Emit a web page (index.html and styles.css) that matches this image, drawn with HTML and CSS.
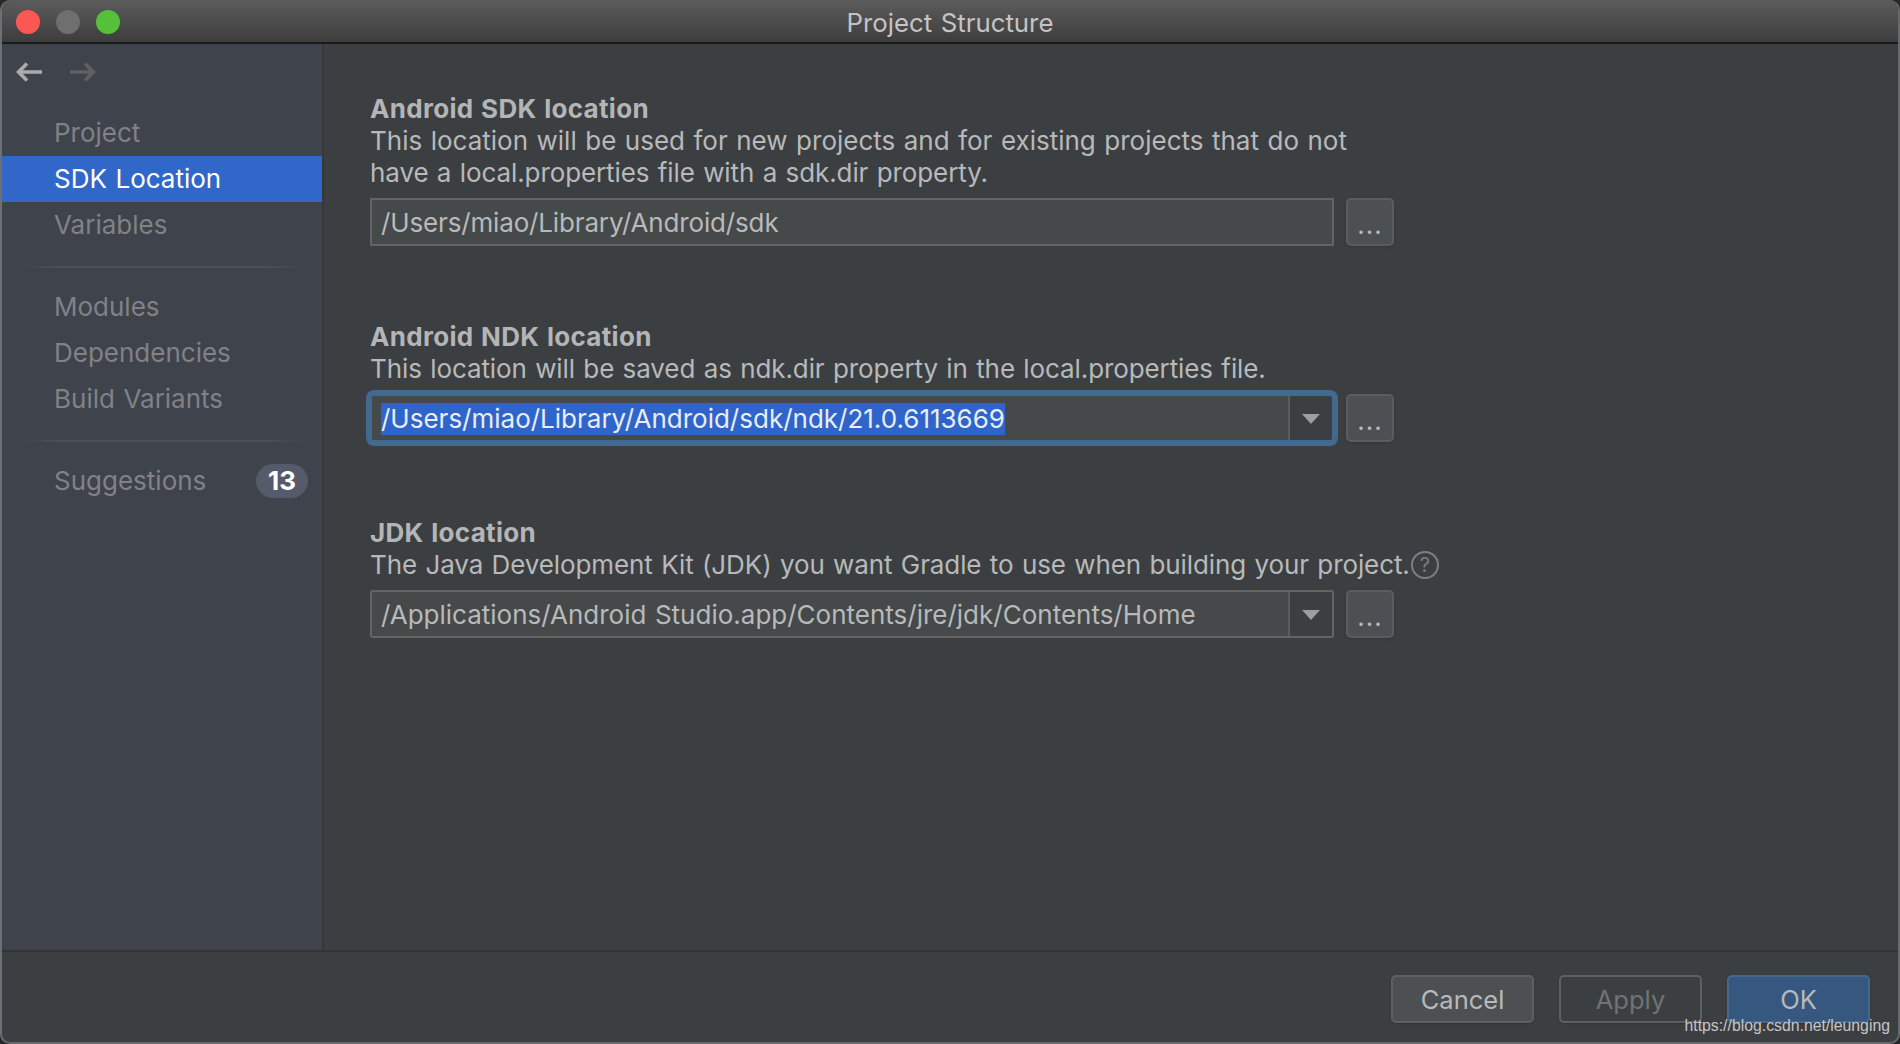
FILE: index.html
```html
<!DOCTYPE html>
<html lang="en">
<head>
    <meta charset="UTF-8">
    <title>Project Structure</title>
    <link rel="stylesheet" href="styles.css">
</head>
<body>
    <div class="window">
        <div class="titlebar">
            <div class="lights">
                <span class="light red"></span>
                <span class="light gray"></span>
                <span class="light green"></span>
            </div>
            <div class="title">Project Structure</div>
        </div>
        <div class="main">
            <div class="sidebar">
                <div class="nav-arrows">
                    <svg width="26" height="20" viewBox="0 0 26 20" class="arrow-on"><path d="M26 10H3M11 1.500L2.500 10L11 18.500" fill="none" stroke="currentColor" stroke-width="3.600"/></svg>
                    <svg width="26" height="20" viewBox="0 0 26 20" class="arrow-off"><path d="M0 10H23M15 1.500L23.500 10L15 18.500" fill="none" stroke="currentColor" stroke-width="3.600"/></svg>
                </div>
                <div class="nav-item">Project</div>
                <div class="nav-item active">SDK Location</div>
                <div class="nav-item">Variables</div>
                <div class="nav-sep"></div>
                <div class="nav-item">Modules</div>
                <div class="nav-item">Dependencies</div>
                <div class="nav-item">Build Variants</div>
                <div class="nav-sep"></div>
                <div class="nav-item">Suggestions<span class="badge">13</span></div>
            </div>
            <div class="content">
                <div class="section">
                    <div class="heading">Android SDK location</div>
                    <div class="desc"><span class="wide">This location will be used for new projects and for existing projects that do not</span><br>have a local.properties file with a sdk.dir property.</div>
                    <div class="field-row">
                        <div class="field tight">/Users/miao/Library/Android/sdk</div>
                        <div class="browse">...</div>
                    </div>
                </div>
                <div class="section">
                    <div class="heading">Android NDK location</div>
                    <div class="desc">This location will be saved as ndk.dir property in the local.properties file.</div>
                    <div class="field-row">
                        <div class="field combo focused">
                            <div class="combo-text"><span class="selected">/Users/miao/Library/Android/sdk/ndk/21.0.6113669</span></div>
                            <div class="combo-arrow"><span class="triangle"></span></div>
                        </div>
                        <div class="browse">...</div>
                    </div>
                </div>
                <div class="section">
                    <div class="heading">JDK location</div>
                    <div class="desc desc-help">The Java Development Kit (JDK) you want Gradle to use when building your project.<span class="help">?</span></div>
                    <div class="field-row">
                        <div class="field combo">
                            <div class="combo-text">/Applications/Android Studio.app/Contents/jre/jdk/Contents/Home</div>
                            <div class="combo-arrow"><span class="triangle"></span></div>
                        </div>
                        <div class="browse">...</div>
                    </div>
                </div>
            </div>
        </div>
        <div class="footer">
            <div class="btn">Cancel</div>
            <div class="btn disabled">Apply</div>
            <div class="btn primary">OK</div>
        </div>
        <div class="watermark">https://blog.csdn.net/leunging</div>
    </div>
</body>
</html>
```

FILE: styles.css
```css
* {
    margin: 0;
    padding: 0;
    box-sizing: border-box;
    font-family: 'Inter', sans-serif;
}
body {
    background: #26282a;
    overflow: hidden;
}
.window {
    position: relative;
    display: flex;
    flex-direction: column;
    width: 1900px;
    height: 1044px;
    background: #3c3f41;
    border-radius: 10px;
    border-left: 2px solid #6c6f75;
    border-right: 2px solid #66686a;
    border-bottom: 2px solid #66686a;
    overflow: hidden;
    font-size: 26px;
    word-spacing: 1.200px;
    color: #b8b9ba;
}
.titlebar {
    position: relative;
    flex: none;
    height: 44px;
    display: flex;
    align-items: center;
    justify-content: center;
    padding-top: 3px;
    background: linear-gradient(#5c5c5c, #3d3d3d);
    border-bottom: 2px solid #1a1a1a;
}
.lights {
    position: absolute;
    left: 14px;
    top: 10px;
    display: flex;
    gap: 16px;
}
.light {
    width: 24px;
    height: 24px;
    border-radius: 50%;
}
.red { background: #fc5753; }
.gray { background: #6f6f70; }
.green { background: #55c13b; }
.title {
    color: #c4c4c4;
    font-size: 25.800px;
}
.main {
    flex: 1;
    display: flex;
    min-height: 0;
    border-bottom: 2px solid #323436;
}
.sidebar {
    flex: none;
    width: 322px;
    background: #3e434c;
    border-right: 2px solid #353739;
    color: #808286;
}
.nav-arrows {
    display: flex;
    gap: 28px;
    height: 66px;
    padding: 18px 0 0 14px;
}
.arrow-on { color: #a9abad; }
.arrow-off { color: #5e6064; }
.nav-item {
    display: flex;
    align-items: center;
    justify-content: space-between;
    height: 46px;
    padding: 0 14px 1px 52px;
}
.nav-item.active {
    margin-left: -2px;
    padding-left: 54px;
    background: #3067c9;
    color: #fff;
}
.nav-sep {
    height: 2px;
    margin: 18px 16px 16px 16px;
    background: linear-gradient(90deg, #3e434c, #4d5056 15%, #4d5056 85%, #3e434c);
}
.badge {
    width: 52px;
    height: 34px;
    line-height: 34px;
    border-radius: 17px;
    background: #565b6b;
    color: #fff;
    font-weight: 700;
    text-align: center;
}
.content {
    flex: 1;
    padding: 49px 0 0 46px;
}
.section {
    margin-bottom: 75px;
}
.heading {
    font-weight: 700;
    line-height: 32px;
    letter-spacing: 0.300px;
    color: #b4b5b6;
}
.desc {
    line-height: 32px;
    letter-spacing: -0.100px;
}
.wide {
    letter-spacing: 0;
}
.desc-help {
    display: flex;
    align-items: center;
    white-space: pre-wrap;
}
.help {
    width: 28px;
    height: 28px;
    margin-left: 1px;
    line-height: 24px;
    border: 2px solid #7b7e82;
    border-radius: 50%;
    font-size: 20px;
    text-align: center;
    color: #7b7e82;
}
.field-row {
    display: flex;
    gap: 12px;
    margin-top: 9px;
    width: 1024px;
}
.field {
    flex: 1;
    height: 48px;
    padding-left: 9px;
    line-height: 46px;
    background: #45494a;
    border: 2px solid #646464;
}
.tight {
    letter-spacing: -0.150px;
}
.combo {
    display: flex;
    padding-left: 0;
    border-radius: 3px;
    background: #3c3f41;
}
.combo-text {
    flex: 1;
    padding-left: 9px;
    background: #45494a;
    border-right: 2px solid #5a5c5e;
}
.combo-arrow {
    flex: none;
    width: 42px;
    display: flex;
    align-items: center;
    justify-content: center;
    padding-top: 1px;
}
.triangle {
    width: 0;
    height: 0;
    border-left: 9px solid transparent;
    border-right: 9px solid transparent;
    border-top: 10px solid #9c9ea0;
}
.focused {
    border-color: #44698f;
    box-shadow: 0 0 0 4px #44698f;
    border-radius: 4px;
}
.selected {
    display: inline-block;
    line-height: 32px;
    background: #2f65ca;
    color: #e8edf6;
}
.browse {
    flex: none;
    width: 48px;
    height: 48px;
    line-height: 50px;
    letter-spacing: 1px;
    text-align: center;
    background: #4c5052;
    border: 2px solid #5a5d5f;
    border-radius: 5px;
    box-shadow: 0 1px 2px #333;
}
.footer {
    flex: none;
    height: 90px;
    display: flex;
    justify-content: flex-end;
    gap: 25px;
    padding: 23px 28px 0 0;
    font-size: 25.500px;
}
.btn {
    width: 143px;
    height: 48px;
    line-height: 46px;
    text-align: center;
    background: #4c5052;
    border: 2px solid #5e6060;
    border-radius: 5px;
    box-shadow: 0 1px 2px #333;
}
.btn.disabled {
    background: none;
    color: #717375;
}
.btn.primary {
    background: #365880;
    border-color: #43688c;
}
.watermark {
    position: absolute;
    right: 8px;
    top: 1017px;
    font-family: 'Liberation Sans', sans-serif;
    font-size: 15.800px;
    word-spacing: 0;
    color: #c4c6c8;
}
```
